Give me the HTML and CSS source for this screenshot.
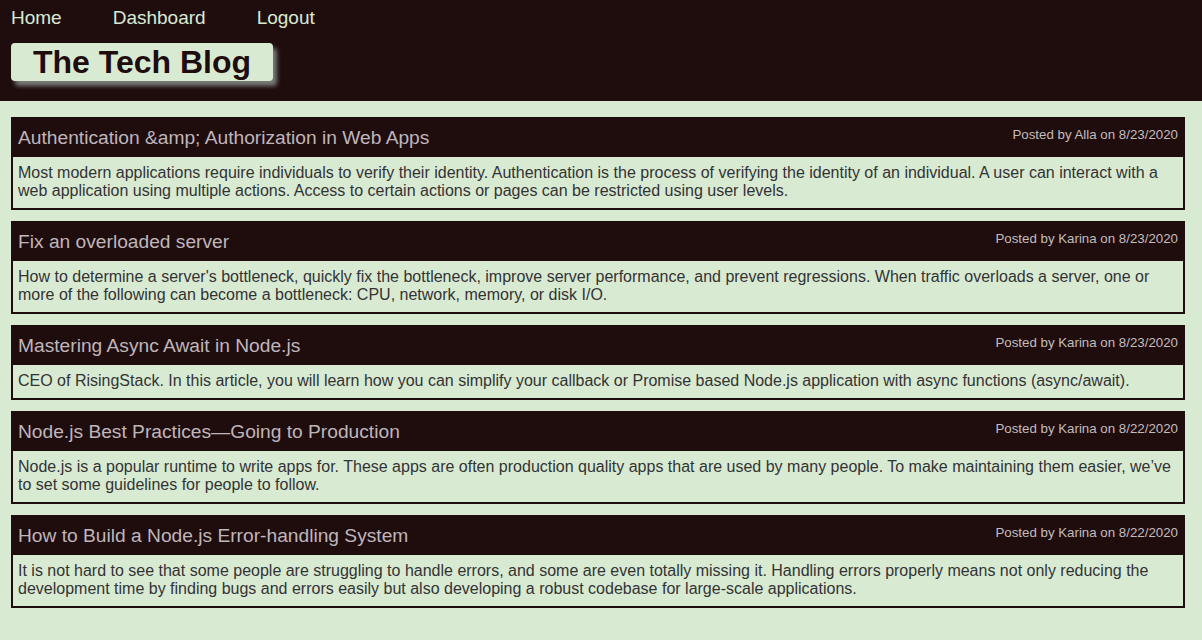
FILE: index.html
```html
<!DOCTYPE html>
<html lang="en">
<head>
<meta charset="utf-8">
<title>The Tech Blog</title>
<link rel="stylesheet" href="styles.css">
</head>
<body>
<header class="site-header">
  <nav class="nav">
    <a class="nav-link" href="#">Home</a>
    <a class="nav-link" href="#">Dashboard</a>
    <a class="nav-link" href="#">Logout</a>
  </nav>
  <h1 class="brand">The Tech Blog</h1>
</header>
<main class="posts">
  <article class="post">
    <div class="post-head">
      <h2 class="post-title">Authentication &amp;amp; Authorization in Web Apps</h2>
      <span class="post-meta">Posted by Alla on 8/23/2020</span>
    </div>
    <p class="post-body">Most modern applications require individuals to verify their identity. Authentication is the process of verifying the identity of an individual. A user can interact with a web application using multiple actions. Access to certain actions or pages can be restricted using user levels.</p>
  </article>
  <article class="post">
    <div class="post-head">
      <h2 class="post-title">Fix an overloaded server</h2>
      <span class="post-meta">Posted by Karina on 8/23/2020</span>
    </div>
    <p class="post-body">How to determine a server's bottleneck, quickly fix the bottleneck, improve server performance, and prevent regressions. When traffic overloads a server, one or more of the following can become a bottleneck: CPU, network, memory, or disk I/O.</p>
  </article>
  <article class="post">
    <div class="post-head">
      <h2 class="post-title">Mastering Async Await in Node.js</h2>
      <span class="post-meta">Posted by Karina on 8/23/2020</span>
    </div>
    <p class="post-body">CEO of RisingStack. In this article, you will learn how you can simplify your callback or Promise based Node.js application with async functions (async/await).</p>
  </article>
  <article class="post">
    <div class="post-head">
      <h2 class="post-title">Node.js Best Practices—Going to Production</h2>
      <span class="post-meta">Posted by Karina on 8/22/2020</span>
    </div>
    <p class="post-body">Node.js is a popular runtime to write apps for. These apps are often production quality apps that are used by many people. To make maintaining them easier, we’ve to set some guidelines for people to follow.</p>
  </article>
  <article class="post">
    <div class="post-head">
      <h2 class="post-title">How to Build a Node.js Error-handling System</h2>
      <span class="post-meta">Posted by Karina on 8/22/2020</span>
    </div>
    <p class="post-body">It is not hard to see that some people are struggling to handle errors, and some are even totally missing it. Handling errors properly means not only reducing the development time by finding bugs and errors easily but also developing a robust codebase for large-scale applications.</p>
  </article>
</main>
</body>
</html>
```
FILE: styles.css
```css
* { box-sizing: border-box; }

html, body {
  margin: 0;
  padding: 0;
}

body {
  background: #d9ead3;
  font-family: "Liberation Sans", Arial, sans-serif;
  color: #333;
  min-height: 640px;
}

.site-header {
  background: #1f0d0d;
  height: 101px;
  padding: 7px 11px 0;
}

.nav {
  display: flex;
  gap: 51px;
}

.nav-link {
  color: #d9ead3;
  text-decoration: none;
  font-size: 19px;
  line-height: 22px;
}

.brand {
  display: inline-block;
  margin: 14px 0 0;
  background: #d9ead3;
  color: #1f0d0d;
  font-size: 32px;
  font-weight: bold;
  line-height: 38px;
  height: 38px;
  padding: 0 22px 0 22px;
  border-radius: 4px;
  box-shadow: 4px 5px 4px #7a7a7a;
}

.posts {
  padding: 16px 17px 0 11px;
  display: flex;
  flex-direction: column;
  gap: 11px;
}

.post {
  border: 2px solid #1f0d0d;
}

.post-head {
  background: #1f0d0d;
  display: flex;
  justify-content: space-between;
  align-items: flex-start;
  padding: 8px 5px 8px 5px;
}

.post-title {
  margin: 0;
  font-size: 19.2px;
  font-weight: normal;
  line-height: 22px;
  color: #bfb6bc;
}

.post-meta {
  font-size: 13.3px;
  line-height: 15px;
  color: #c4bcbc;
  margin-top: 0;
}

.post-body {
  margin: 0;
  padding: 7px 5px 8px 5px;
  font-size: 16px;
  line-height: 18px;
  color: #333;
}
```
